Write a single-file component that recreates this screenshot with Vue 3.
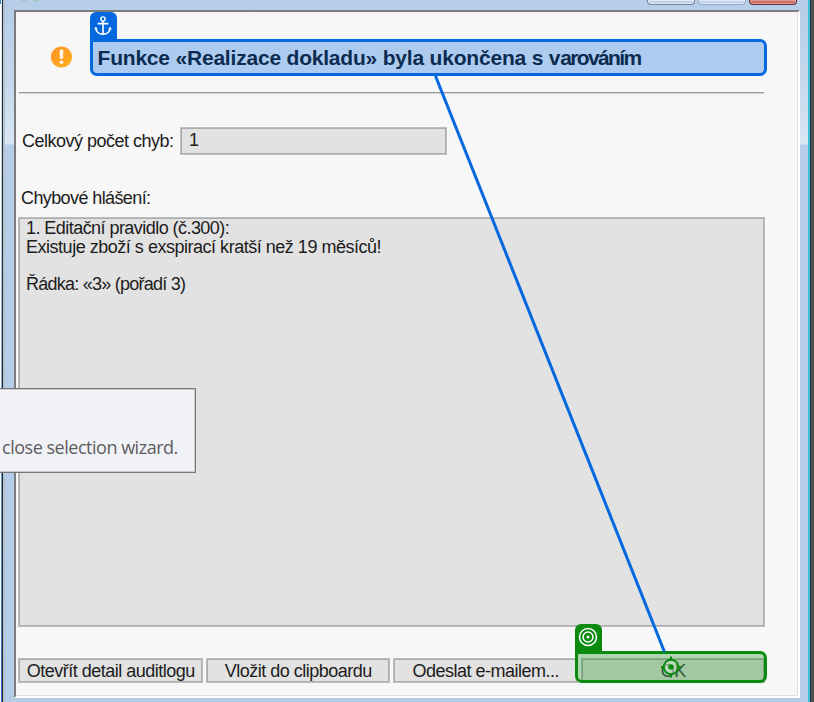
<script setup>
const buttons = [
  { label: 'Otevřít detail auditlogu', cls: 'b1' },
  { label: 'Vložit do clipboardu', cls: 'b2' },
  { label: 'Odeslat e-mailem...', cls: 'b3' },
  { label: 'OK', cls: 'b4' }
]
</script>

<template>
  <main class="window">
    <header class="titlebar">
      <i class="app-mark"></i><i class="app-mark"></i>
      <span class="controls"><i></i><i class="disabled"></i><i class="close"></i></span>
    </header>
    <section class="client">
      <div class="heading">
        <svg class="warning" width="24" height="24" viewBox="0 0 24 24">
          <defs>
            <linearGradient id="amber" x1="0" y1="0" x2="1" y2="1">
              <stop offset="0" stop-color="#ff9424" />
              <stop offset="1" stop-color="#ffaf1c" />
            </linearGradient>
          </defs>
          <circle cx="11.500" cy="12" r="10.600" fill="url(#amber)" />
          <path d="M10 5h3l-.4 8.600h-2.200z" fill="#fff" stroke="#fff" stroke-linejoin="round" stroke-width=".6" />
          <rect x="9.700" y="15.800" width="3.600" height="3" rx="1" fill="#fff" />
        </svg>
        <h1><span class="t-wide">Funkce «Realizace dokladu» byla ukončena s v</span><span class="t-tight">arováním</span></h1>
      </div>
      <div class="count">
        <label>Celkový počet chyb:</label>
        <div class="field">1</div>
      </div>
      <div class="caption">Chybové hlášení:</div>
      <div class="messages">
        <p class="m1">1. Editační pravidlo (č.300):</p>
        <p class="m2">Existuje zboží s exspirací kratší než 19 měsíců!</p>
        <p>&nbsp;</p>
        <p class="m3">Řádka: «3» (pořadí 3)</p>
      </div>
      <footer>
        <button v-for="b in buttons" :key="b.label" :class="b.cls"><span>{{ b.label }}</span></button>
      </footer>
    </section>

    <aside class="hint"><span>close selection wizard.</span></aside>

    <div class="anchor-box"></div>
    <div class="anchor-tab">
      <svg width="20" height="22" viewBox="0 0 20 22" fill="none" stroke="#fff" stroke-width="1.600">
        <circle cx="10" cy="4" r="2.100" stroke-width="1.400" />
        <path d="M10 6v13.500M4.700 8.600h10.600" />
        <path d="M2.700 12.500c.2 4.200 3.300 6.700 7.300 6.700s7.100-2.500 7.300-6.700" />
        <path d="M1.800 14.500l.9-2 2 1.700M18.200 14.500l-.9-2-2 1.700" stroke-width="1" />
      </svg>
    </div>
    <div class="target-box"></div>
    <div class="target-tab">
      <svg width="20" height="20" viewBox="0 0 20 20" fill="none" stroke="#fff" stroke-width="1.500">
        <circle cx="10" cy="10" r="8.500" />
        <circle cx="10" cy="10" r="5" />
        <circle cx="10" cy="10" r="1.500" fill="#fff" stroke="none" />
      </svg>
    </div>
    <svg class="connector" width="814" height="702" viewBox="0 0 814 702" fill="none">
      <path d="M435.500 76L664.500 652" stroke="#0468de" stroke-width="3" />
      <circle cx="671" cy="667" r="7.200" fill="#d9ecdb" fill-opacity=".5" stroke="#0a8a0e" stroke-width="2" />
      <path d="M671 656.500v4M671 673.500v4M661 667h3M678 667h3" stroke="#0a8a0e" stroke-width="2" />
      <circle cx="671" cy="667" r="2.800" fill="#0a8a0e" />
    </svg>
  </main>
</template>

<style>
body { margin: 0; overflow: hidden; }
</style>

<style scoped>
* { box-sizing: border-box; }
.window {
  position: relative; width: 814px; height: 702px; overflow: hidden;
  padding: 0 14px; color: #1c1c1c;
  font: 18px/18.500px "Liberation Sans", Arial, sans-serif;
  background:
    linear-gradient(#4f4f4f, #4f4f4f) 811px 0 / 3px 100% no-repeat,
    linear-gradient(#20343d, #20343d) 810px 0 / 1px 100% no-repeat,
    linear-gradient(#42bfdc, #42bfdc) 808px 0 / 2px 100% no-repeat,
    linear-gradient(#347bbd, #347bbd) 0 0 / 1px 4px no-repeat,
    linear-gradient(#fff, #fff) 0 0 / 1px 100% no-repeat,
    linear-gradient(#e9f1f9, #2873c5) 0 0 / 2px 100% no-repeat,
    linear-gradient(#242a30, #242a30) 2px 0 / 1px 100% no-repeat,
    linear-gradient(#b6c2cc, #b6c2cc) 3px 0 / 2px 100% no-repeat,
    linear-gradient(#b5cde8 0, #c4d7ec 80px, #dae7f4 144px, #b5cde8 145px);
}
.titlebar { height: 10px; display: flex; align-items: flex-start; padding-left: 8px; gap: 7px; }
.app-mark { width: 4px; height: 1px; background: #8fc9a7; }
.controls { display: flex; gap: 3px; margin-left: auto; padding-right: 3px; }
.controls i { width: 48px; height: 5px; border: 1px solid #74849a; border-top: 0; border-radius: 0 0 4px 4px; background: #bfd4ec; box-shadow: inset 0 0 0 1px #dce8f5; }
.controls .disabled { border-color: #98acc4; }
.controls .close { border-color: #60343e; background: #cf7065; box-shadow: inset 0 0 0 1px #df9a90; }
.client {
  height: 688px; width: 786px; display: flex; flex-direction: column; align-items: flex-start;
  padding-left: 2px; background: #f7f7f7;
  border: 2px solid #7c7c7c; border-right-color: #fff; border-bottom-color: #fff;
  box-shadow: inset -1px -1px #e1e1e1;
}
.heading { width: 745px; height: 82px; margin-left: 1px; padding: 27px 0 0 31px; display: flex; align-items: flex-start; border-bottom: 1px solid #d4d4d4; box-shadow: inset 0 -1px #999; }
.warning { margin-top: 6px; flex: none; }
h1 { margin: 6px 0 0 23.500px; font-size: 21px; line-height: 26px; white-space: nowrap; color: #101010; }
.t-wide { letter-spacing: -.2px; }
.t-tight { letter-spacing: -1.650px; }
.count { display: flex; margin-top: 33px; align-items: center; height: 28px; }
.count label { width: 162px; padding: 1px 0 0 4px; white-space: nowrap; letter-spacing: -.5px; }
.field, .messages, button { border: 1px solid #bdbdbd; box-shadow: inset 0 0 0 1px #adadad; background: #e2e2e2; }
.field { width: 267px; height: 28px; padding: 3px 8px; }
.caption { margin: 34px 0 0 3px; letter-spacing: -.6px; height: 28px; }
.messages { width: 747px; height: 410px; padding: 1px 7px; letter-spacing: -.5px; }
p { margin: 0; height: 18.500px; white-space: nowrap; }
.m1 { letter-spacing: -.55px; }
.m2 { letter-spacing: -.48px; }
.m3 { letter-spacing: -.75px; }
footer { display: flex; gap: 3px; margin-top: 31px; }
button { width: 184.500px; height: 25px; padding: 1px 0 0 1px; color: #1c1c1c; font: inherit; letter-spacing: -.5px; white-space: nowrap; }
.b4 { color: #444; }
.hint { position: absolute; left: -2px; top: 388px; width: 198px; height: 85px; padding: 46px 0 0 3px; border: 1px solid #777; box-shadow: inset -1px -1px #ccc, inset 0 1px #ccc; background: #f1f2f8; font: 18px/25px "Open Sans", "Noto Sans", sans-serif; letter-spacing: -.48px; color: #5c5c5c; white-space: nowrap; }
.anchor-box { position: absolute; left: 90px; top: 39px; width: 676.500px; height: 37px; border: 3px solid #0468de; border-radius: 0 7px 7px 7px; background: rgba(4, 104, 222, .3); }
.anchor-tab { position: absolute; left: 90px; top: 12px; width: 26.500px; height: 28px; border-radius: 6px 6px 0 0; background: #0468de; display: flex; padding: 3px; }
.target-box { position: absolute; left: 575px; top: 651px; width: 191.500px; height: 32px; border: 3px solid #0a8a0e; border-radius: 0 7px 7px 7px; background: rgba(10, 138, 14, .3); }
.target-tab { position: absolute; left: 575px; top: 624px; width: 26.500px; height: 28px; border-radius: 6px 6px 0 0; background: #0a8a0e; display: flex; padding: 3px; }
.connector { position: absolute; left: 0; top: 0; }
</style>
